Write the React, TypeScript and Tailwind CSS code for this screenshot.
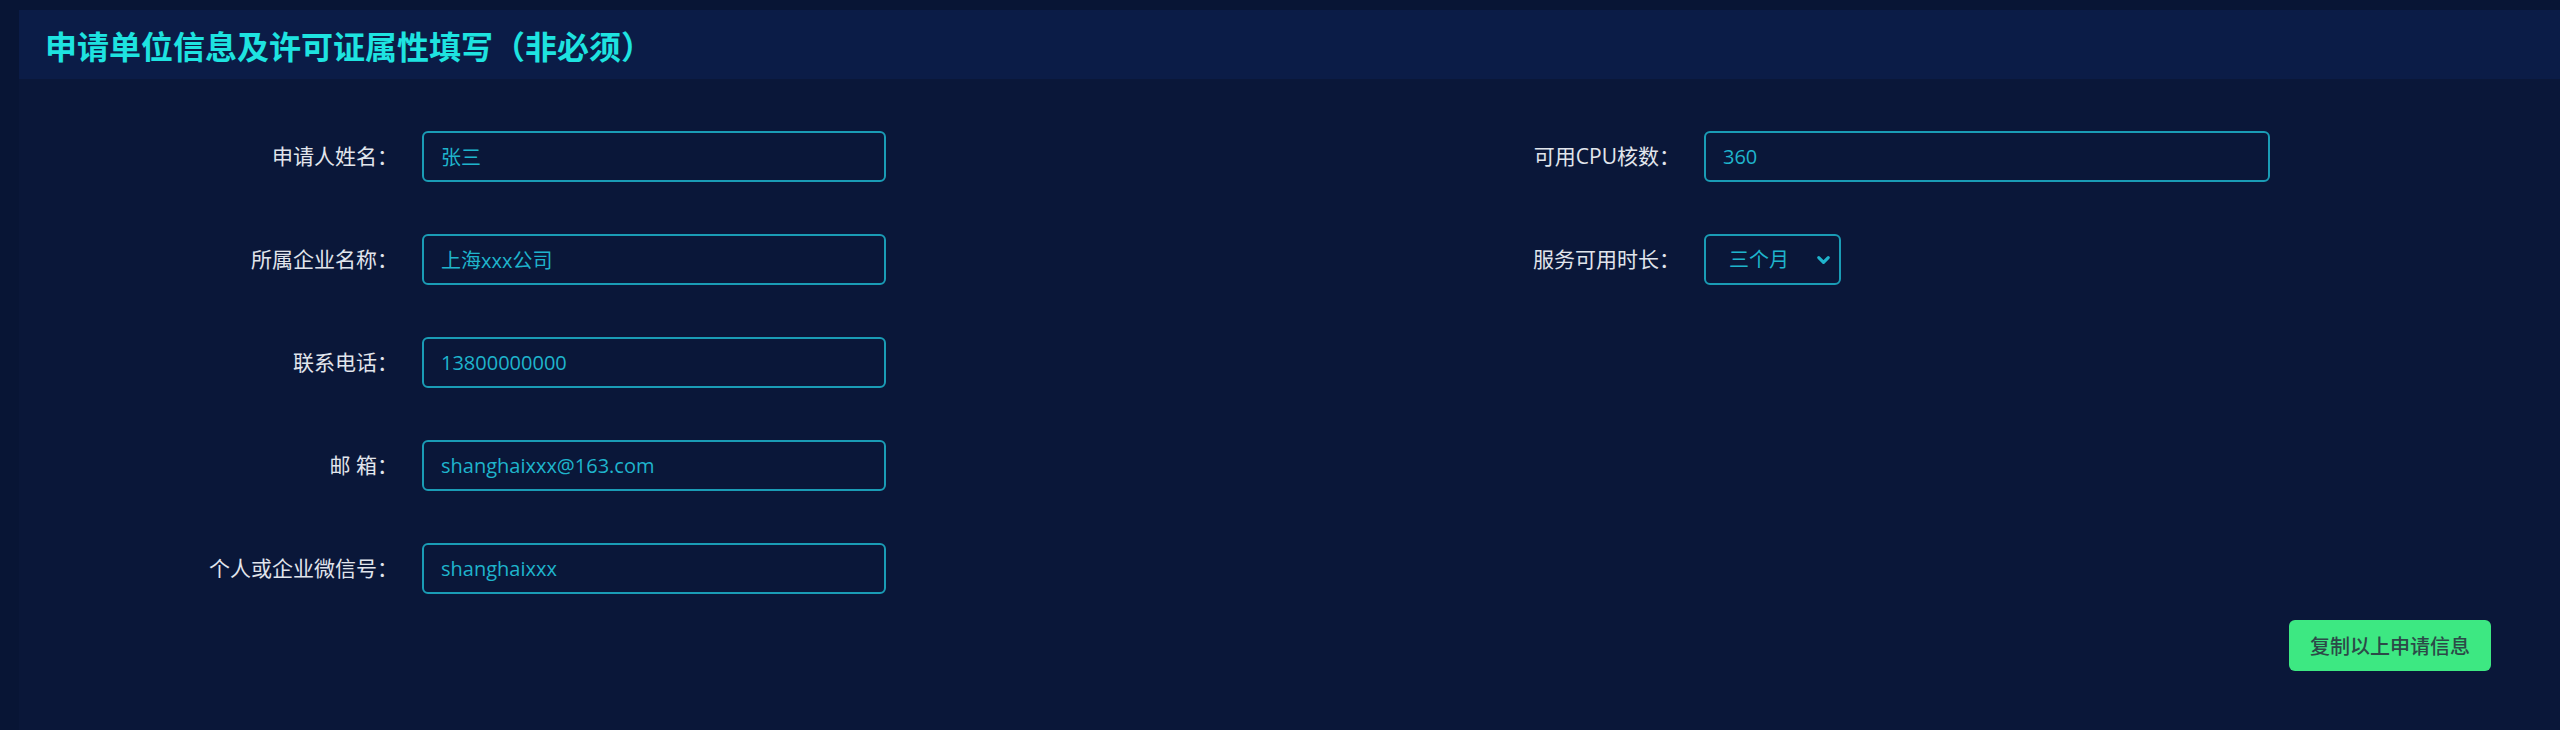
import { ChevronDown } from "lucide-react";

const leftFields = [
  { label: "申请人姓名：", value: "张三" },
  { label: "所属企业名称：", value: "上海xxx公司" },
  { label: "联系电话：", value: "13800000000" },
  { label: "邮 箱：", value: "shanghaixxx@163.com" },
  { label: "个人或企业微信号：", value: "shanghaixxx" },
];

const font = "font-['Open_Sans','Noto_Sans_CJK_SC',sans-serif]";

const App = () => {
  return (
    <div className={`min-h-[730px] bg-[#081535] pl-[19px] pt-[10px] ${font}`}>
      <div className="min-h-[720px] bg-[#0a1739]">
        {/* header */}
        <div className="h-[69px] bg-[#0b1c47] pl-[26px] flex items-center">
          <h2 className="text-[32px] font-bold text-[#1ee3e0] font-['Noto_Sans_CJK_SC',sans-serif]">
            申请单位信息及许可证属性填写（非必须）
          </h2>
        </div>

        <div className="flex pt-[52px]">
          {/* left column */}
          <div className="w-[867px] pl-[173px] flex flex-col gap-[52px]">
            {leftFields.map((f) => (
              <div key={f.label} className="flex items-center">
                <label className="w-[206px] text-right text-[21px] text-[#e1e5ec] mr-[24px]">
                  {f.label}
                </label>
                <input
                  type="text"
                  defaultValue={f.value}
                  className="w-[464px] h-[51px] border-2 border-[#1a9cb5] rounded-[6px] bg-transparent px-[17px] text-[20px] text-[#1fb4cc] outline-none"
                />
              </div>
            ))}
          </div>

          {/* right column */}
          <div className="pl-[588px] flex flex-col gap-[52px]">
            <div className="flex items-center">
              <label className="w-[206px] text-right text-[21px] text-[#e1e5ec] mr-[24px]">
                可用CPU核数：
              </label>
              <input
                type="text"
                defaultValue="360"
                className="w-[566px] h-[51px] border-2 border-[#1a9cb5] rounded-[6px] bg-transparent px-[17px] text-[20px] text-[#1fb4cc] outline-none"
              />
            </div>
            <div className="flex items-center">
              <label className="w-[206px] text-right text-[21px] text-[#e1e5ec] mr-[24px]">
                服务可用时长：
              </label>
              <div className="relative w-[137px] h-[51px]">
                <select
                  defaultValue="3"
                  className="appearance-none w-full h-full border-2 border-[#1a9cb5] rounded-[6px] bg-transparent pl-[23px] text-[20px] text-[#1fb4cc] outline-none"
                >
                  <option value="1" className="bg-[#0a1739]">一个月</option>
                  <option value="3" className="bg-[#0a1739]">三个月</option>
                  <option value="6" className="bg-[#0a1739]">六个月</option>
                </select>
                <ChevronDown
                  size={19}
                  strokeWidth={4}
                  className="absolute right-[8px] top-1/2 -translate-y-1/2 text-[#1fb4cc] pointer-events-none"
                />
              </div>
            </div>
          </div>
        </div>

        <div className="flex justify-end pr-[69px] pt-[26px] pb-[55px]">
          <button className="h-[51px] px-[21px] rounded-[6px] bg-[#3de882] text-[20px] font-medium text-[#2c4a48] font-['Noto_Sans_CJK_SC',sans-serif]">
            复制以上申请信息
          </button>
        </div>
      </div>
    </div>
  );
};

export default App;
